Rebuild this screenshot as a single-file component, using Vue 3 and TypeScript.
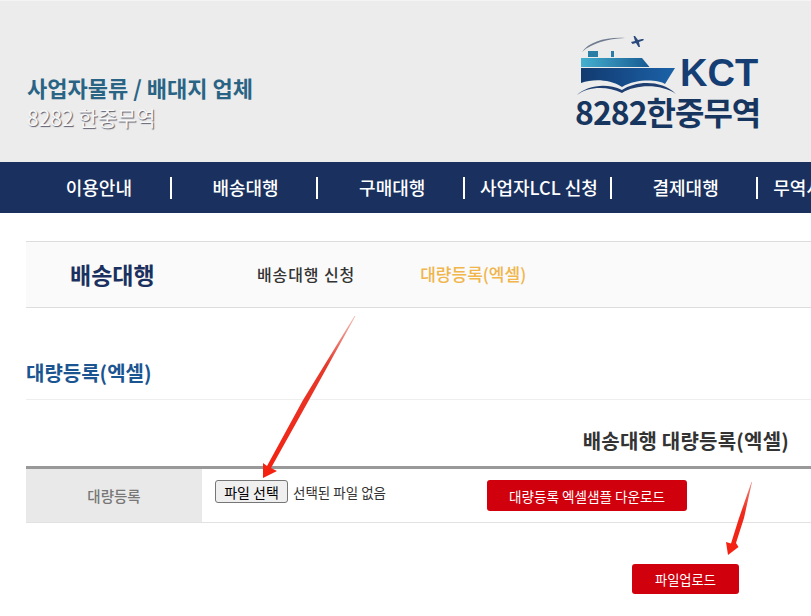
<template>
  <div class="page">
    <header class="top">
      <div class="brand">
        <p class="brand-title">사업자물류 / 배대지 업체</p>
        <p class="brand-sub">8282 한중무역</p>
      </div>
      <div class="logo">
        <div class="logo-row">
          <svg class="ship" width="105" height="62" viewBox="0 0 105 62">
            <defs>
              <linearGradient id="deck" x1="0" x2="1" y1="0" y2="0">
                <stop offset="0" stop-color="#45b0cf" />
                <stop offset="1" stop-color="#175a92" />
              </linearGradient>
              <linearGradient id="hull" x1="0" x2="1" y1="0" y2="0">
                <stop offset="0" stop-color="#123a70" />
                <stop offset="1" stop-color="#1b62a8" />
              </linearGradient>
            </defs>
            <path d="M7 18 C14 8 30 3 50 4 C32 5 17 9 7 18Z" fill="#6f7c90" />
            <path d="M56 8 L60 7 L58.500 2 L60 2 L63 6 L67 5 C69 4.600 69.500 5.800 68 6.500 L64 8 L65 13 L63.500 13 L61 9 L57.500 10Z" fill="#2b4a7c" />
            <rect x="13" y="17" width="10" height="6" fill="#2a7ea6" />
            <rect x="36" y="17" width="3" height="6" fill="#2a7ea6" />
            <path d="M6 24 H67 L74.500 33 H6Z" fill="url(#deck)" />
            <path d="M6 34 H100 L90 50 C84 46 62 44 47 53 C34 45 18 45 6 49Z" fill="url(#hull)" />
            <path d="M2 61 C11 52 31 48 47 56 C60 47 86 45 101 60 C86 50 62 50 47 59 C31 51 12 53 2 61Z" fill="#1f3f72" />
          </svg>
          <span class="logo-kct">KCT</span>
        </div>
        <div class="logo-name">8282한중무역</div>
      </div>
    </header>

    <nav class="gnb">
      <a v-for="item in menu" :key="item" class="gnb-item">{{ item }}</a>
    </nav>

    <main class="content">
      <div class="sub">
        <strong class="sub-title">배송대행</strong>
        <a class="sub-link">배송대행 신청</a>
        <a class="sub-link active">대량등록(엑셀)</a>
      </div>

      <h2 class="heading">대량등록(엑셀)</h2>
      <h3 class="table-title">배송대행 대량등록(엑셀)</h3>

      <div class="row">
        <div class="row-label">대량등록</div>
        <div class="row-body">
          <div class="file">
            <button class="file-btn" type="button">파일 선택</button>
            <span class="file-name">선택된 파일 없음</span>
          </div>
          <button class="red sample" type="button">대량등록 엑셀샘플 다운로드</button>
        </div>
      </div>

      <div class="actions">
        <button class="red upload" type="button">파일업로드</button>
      </div>
    </main>

    <!-- annotation arrows drawn over the screenshot -->
    <svg class="marks" width="811" height="616" viewBox="0 0 811 616">
      <defs>
        <linearGradient id="fade1" x1="355" y1="316" x2="263" y2="478" gradientUnits="userSpaceOnUse">
          <stop offset="0" stop-color="#f3c0b8" />
          <stop offset=".3" stop-color="#e53a2c" />
          <stop offset="1" stop-color="#f5200f" />
        </linearGradient>
        <linearGradient id="fade2" x1="752" y1="482" x2="728" y2="555" gradientUnits="userSpaceOnUse">
          <stop offset="0" stop-color="#f08a80" />
          <stop offset=".4" stop-color="#ef2a1c" />
          <stop offset="1" stop-color="#f5200f" />
        </linearGradient>
      </defs>
      <path d="M355.500 316 L309 400 L271 468 L277 471 L263 478 L263 463 L267 466 L303 400 L354.500 316Z" fill="url(#fade1)" />
      <path d="M752 482 L744 518 L736 543 L738.500 547 L728 555 L726 542 L731 543.500 L739 518 L751.500 482Z" fill="url(#fade2)" />
    </svg>
  </div>
</template>

<script setup lang="ts">
const menu: string[] = ['이용안내', '배송대행', '구매대행', '사업자LCL 신청', '결제대행', '무역사이트 안내']
</script>

<style scoped>
.page {
  position: relative;
  width: 811px;
  height: 616px;
  overflow: hidden;
  background: #fff;
  font-family: "Noto Sans CJK KR", "Noto Sans", sans-serif;
}

.top {
  height: 161px;
  border-top: 1px solid #f4f4f4;
  background: #ececec;
  display: flex;
  justify-content: space-between;
  padding-right: 52px;
}

.brand {
  padding: 71px 0 0 27px;
}

.brand p {
  margin: 0;
}

.brand-title {
  font-size: 22px;
  line-height: 30px;
  font-weight: 700;
  color: #2a6485;
}

.brand-sub {
  font-size: 21px;
  line-height: 30px;
  color: #f7f7f7;
  text-shadow: 1px 1px 1px #5d5d6d;
}

.logo {
  width: 184px;
  padding-top: 33px;
}

.logo-row {
  display: flex;
  align-items: flex-start;
  height: 62px;
}

.ship {
  flex-shrink: 0;
}

.logo-kct {
  margin-top: 20px;
  font-family: "Liberation Sans", sans-serif;
  font-size: 38px;
  line-height: 38px;
  font-weight: 700;
  color: #143e74;
}

.logo-name {
  margin-top: -3px;
  font-size: 32px;
  line-height: 36px;
  font-weight: 700;
  color: #17365f;
  letter-spacing: -1px;
  white-space: nowrap;
}

.gnb {
  height: 51px;
  background: #1a315f;
  display: flex;
  padding-left: 25px;
  align-items: center;
}

.gnb-item {
  flex: 0 0 146.700px;
  box-sizing: border-box;
  height: 22px;
  padding-left: 3px;
  line-height: 20px;
  text-align: center;
  color: #fff;
  font-size: 18px;
  font-weight: 500;
  border-right: 2px solid #fff;
  white-space: nowrap;
}

.gnb-item:last-child {
  border-right: 0;
}

.content {
  padding: 28px 0 0 26px;
}

.sub {
  height: 67px;
  box-sizing: border-box;
  padding-bottom: 2px;
  border-top: 1px solid #ddd;
  border-bottom: 1px solid #ddd;
  background: #fafafa;
  display: flex;
  align-items: center;
}

.sub-title {
  margin-left: 44px;
  width: 187px;
  font-size: 23px;
  font-weight: 700;
  color: #1a315f;
}

.sub-link {
  font-size: 16px;
  font-weight: 500;
  letter-spacing: 0.9px;
  color: #333;
  margin-right: 65px;
}

.sub-link.active {
  font-size: 17px;
  letter-spacing: 0;
  color: #f0b54b;
}

.heading {
  margin: 0;
  height: 92px;
  box-sizing: border-box;
  padding-top: 49px;
  font-size: 20px;
  line-height: 32px;
  font-weight: 700;
  color: #1b5591;
  border-bottom: 1px solid #eee;
}

.table-title {
  margin: 0;
  height: 66px;
  padding: 26px 22px 0 0;
  box-sizing: border-box;
  text-align: right;
  font-size: 20px;
  line-height: 30px;
  font-weight: 700;
  letter-spacing: 0.2px;
  color: #333;
}

.row {
  display: flex;
  height: 57px;
  border-top: 3px solid #999;
  border-bottom: 1px solid #e2e2e2;
  box-sizing: border-box;
}

.row-label {
  width: 176px;
  background: #e9e9e9;
  color: #777;
  font-size: 14.500px;
  font-weight: 500;
  display: flex;
  align-items: center;
  justify-content: center;
}

.row-body {
  flex: 1;
  display: flex;
  align-items: flex-start;
  padding: 11px 0 0 13px;
}

.file {
  width: 272px;
  display: flex;
  align-items: center;
  gap: 5px;
}

.file-btn {
  width: 73px;
  height: 23px;
  padding: 0;
  box-sizing: border-box;
  border: 1px solid #767676;
  border-radius: 3px;
  background: #efefef;
  color: #000;
  font-family: inherit;
  font-size: 14px;
}

.file-name {
  font-size: 13.500px;
  color: #333;
}

.red {
  border: 0;
  padding: 0;
  border-radius: 3px;
  background: #d0000d;
  color: #fff;
  font-family: inherit;
}

.sample {
  width: 200px;
  height: 31px;
  font-size: 13.600px;
}

.actions {
  padding: 41px 0 0 606px;
}

.upload {
  width: 107px;
  height: 30px;
  font-size: 13.300px;
}

.marks {
  position: absolute;
  left: 0;
  top: 0;
  pointer-events: none;
}
</style>
